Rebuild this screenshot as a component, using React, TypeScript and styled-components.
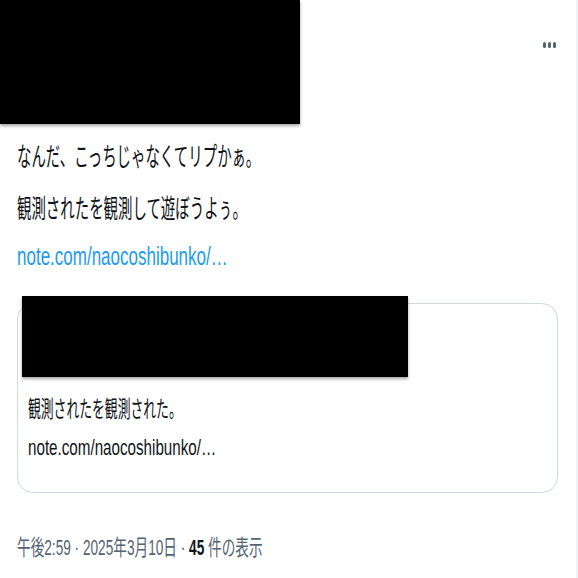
import styled, { createGlobalStyle } from 'styled-components';

const GlobalStyle = createGlobalStyle`
  html,
  body {
    margin: 0;
    padding: 0;
    background: #ffffff;
  }

  body {
    font-family: 'Liberation Sans', 'Noto Sans CJK JP', sans-serif;
    color: #0f1419;
  }
`;

const Tweet = styled.article`
  position: relative;
  width: 578px;
  height: 578px;
  box-sizing: border-box;
  border-right: 2px solid #eff3f4;
  overflow: hidden;
`;

const Header = styled.header`
  position: relative;
  height: 124px;
  display: flex;
  justify-content: flex-end;
  padding: 38px 20px 0 0;
  box-sizing: border-box;
`;

const Redaction = styled.div<{ $top: number; $left: number; $w: number; $h: number }>`
  position: absolute;
  top: ${({ $top }) => $top}px;
  left: ${({ $left }) => $left}px;
  width: ${({ $w }) => $w}px;
  height: ${({ $h }) => $h}px;
  background: #000000;
  box-shadow: 0 2px 3px rgba(0, 0, 0, 0.35);
  z-index: 2;
`;

const MoreButton = styled.div`
  display: flex;
  gap: 2px;
  height: 14px;
  align-items: center;
`;

const Dot = styled.span`
  width: 3px;
  height: 6px;
  border-radius: 2px;
  background: #536471;
`;

const Body = styled.section`
  padding: 0 16px 0 17px;
  display: flex;
  flex-direction: column;
`;

const Line = styled.div<{ $mt: number; $h?: number }>`
  margin-top: ${({ $mt }) => $mt}px;
  height: ${({ $h }) => $h ?? 28}px;
  line-height: ${({ $h }) => $h ?? 28}px;
  white-space: nowrap;
`;

const Squeeze = styled.span<{ $size: number; $scale: number; $color?: string }>`
  display: inline-block;
  font-size: ${({ $size }) => $size}px;
  transform: scaleX(${({ $scale }) => $scale});
  transform-origin: left center;
  color: ${({ $color }) => $color ?? '#0f1419'};
`;

const Card = styled.div`
  position: relative;
  margin-top: 33px;
  width: 541px;
  height: 190px;
  box-sizing: border-box;
  border: 1px solid #cfd9de;
  border-radius: 16px;
  padding: 93px 10px 0 10px;
  display: flex;
  flex-direction: column;
`;

const Bold = styled.b`
  color: #0f1419;
  font-weight: 700;
`;

export default function App() {
  return (
    <>
      <GlobalStyle />
      <Tweet>
        <Header>
          <Redaction $top={0} $left={0} $w={300} $h={124} />
          <MoreButton>
            <Dot />
            <Dot />
            <Dot />
          </MoreButton>
        </Header>

        <Body>
          <Line $mt={19}>
            <Squeeze $size={26} $scale={0.555}>
              なんだ、こっちじゃなくてリプかぁ。
            </Squeeze>
          </Line>
          <Line $mt={24}>
            <Squeeze $size={26} $scale={0.555}>
              観測されたを観測して遊ぼうよぅ。
            </Squeeze>
          </Line>
          <Line $mt={19}>
            <Squeeze $size={25} $scale={0.68} $color="#1d9bf0">
              note.com/naocoshibunko/…
            </Squeeze>
          </Line>

          <Card>
            <Redaction $top={-8} $left={4} $w={386} $h={81} />
            <Line $mt={0} $h={24}>
              <Squeeze $size={23} $scale={0.557}>
                観測されたを観測された。
              </Squeeze>
            </Line>
            <Line $mt={15} $h={24}>
              <Squeeze $size={22} $scale={0.69}>
                note.com/naocoshibunko/…
              </Squeeze>
            </Line>
          </Card>

          <Line $mt={43} $h={24}>
            <Squeeze $size={22} $scale={0.62} $color="#536471">
              午後2:59 · 2025年3月10日 · <Bold>45</Bold> 件の表示
            </Squeeze>
          </Line>
        </Body>
      </Tweet>
    </>
  );
}
